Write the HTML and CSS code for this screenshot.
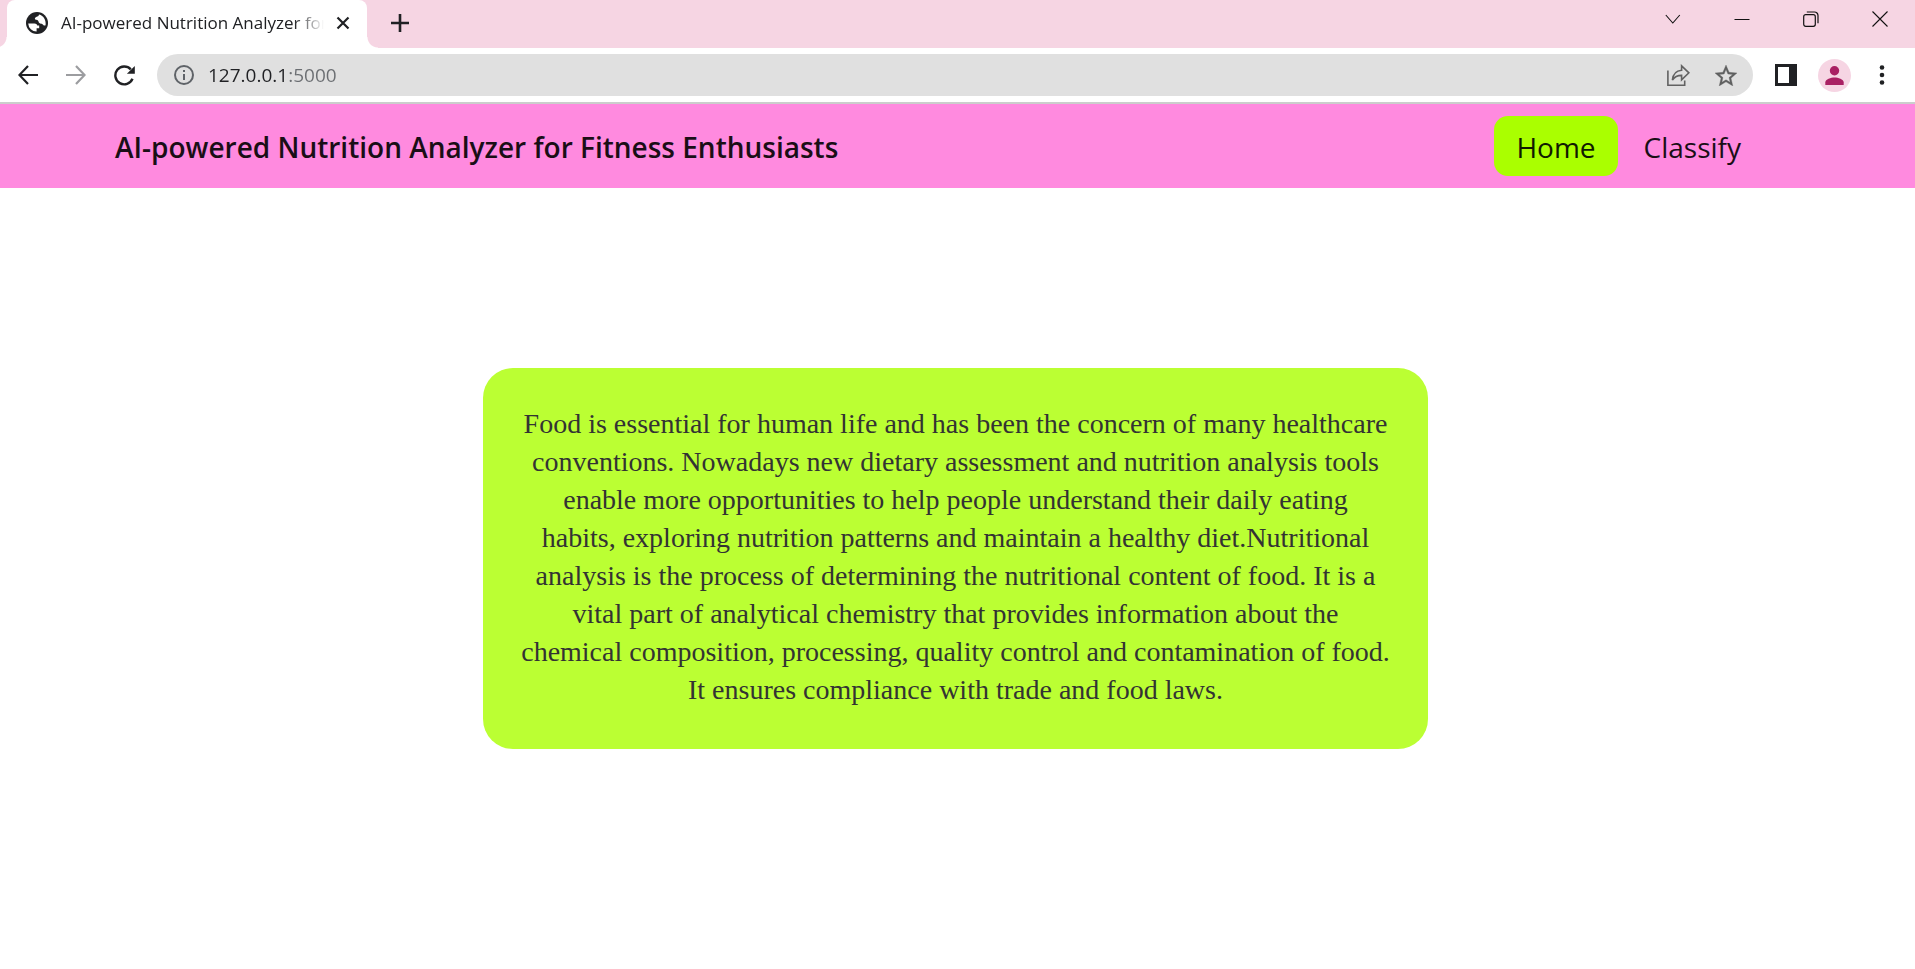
FILE: index.html
```html
<!DOCTYPE html>
<html lang="en">
<head>
<meta charset="utf-8">
<title>AI-powered Nutrition Analyzer for Fitness Enthusiasts</title>
<link rel="stylesheet" href="styles.css">
</head>
<body>
<div class="browser">
  <div class="tab-strip">
    <div class="tab">
      <svg class="favicon" viewBox="0 0 22 22" width="22" height="22" aria-hidden="true">
        <circle cx="11" cy="11" r="11" fill="#202124"/>
        <path d="M2.2 11.400h6.200c2 0 2.800 1 2.800 2.200h2v2.600h-2.600v3.400A8.700 8.700 0 0 1 2.200 11.400z" fill="#fff"/>
        <path d="M13 2.500c-.1 1.700-1.400 1.900-2.800 2.400-1.800.6-1.800 2.600 0 2.900 1.800.3 2.100.8 2.300 1.800.3 1.300 1.200 2.100 2.600 2.100 1.200 0 1.600.6 2.200 1.300.6.6 1.400.6 2.300.3.700-5.100-1.900-9.600-6.600-10.800z" fill="#fff"/>
      </svg>
      <span class="tab-title">AI-powered Nutrition Analyzer for Fitness Enthusiasts</span>
      <button class="tab-close" type="button" aria-label="Close tab">
        <svg viewBox="0 0 14 14" width="14" height="14"><path d="M1.500 1.500l11 11M12.500 1.500l-11 11" stroke="#202124" stroke-width="2.200" fill="none"/></svg>
      </button>
    </div>
    <button class="new-tab" type="button" aria-label="New tab">
      <svg viewBox="0 0 18 18" width="18" height="18"><path d="M9 0v18M0 9h18" stroke="#202124" stroke-width="2.600" fill="none"/></svg>
    </button>
    <div class="window-controls">
      <button type="button" aria-label="Search tabs"><svg viewBox="0 0 16 16" width="16" height="16"><path d="M.8 4l7 8 7-8" stroke="#111" stroke-width="1.100" fill="none"/></svg></button>
      <button type="button" aria-label="Minimize"><svg viewBox="0 0 16 16" width="16" height="16"><path d="M.5 8.500h15" stroke="#111" fill="none"/></svg></button>
      <button type="button" aria-label="Restore"><svg viewBox="0 0 16 16" width="16" height="16"><g fill="none" stroke="#111" stroke-width="1.200"><rect x=".7" y="3.700" width="11.600" height="11.600" rx="2"/><path d="M3.800 1h7.700a3.500 3.500 0 0 1 3.500 3.500v7.700"/></g></svg></button>
      <button type="button" aria-label="Close"><svg viewBox="0 0 16 16" width="16" height="16"><path d="M.5.5l15 15M15.500.5l-15 15" stroke="#111" stroke-width="1.100" fill="none"/></svg></button>
    </div>
  </div>
  <div class="toolbar">
    <button class="tool" type="button" aria-label="Back"><svg viewBox="0 0 20 20" width="20" height="20"><path d="M20 10H1.800M10 .9L1.400 10l8.600 9.100" stroke="#202124" stroke-width="2.200" fill="none"/></svg></button>
    <button class="tool" type="button" aria-label="Forward"><svg viewBox="0 0 20 20" width="20" height="20"><path d="M0 10h18.200M10 .9l8.600 9.100-8.600 9.100" stroke="#9c9da0" stroke-width="2.200" fill="none"/></svg></button>
    <button class="tool" type="button" aria-label="Reload"><svg viewBox="0 0 21 21" width="21" height="21"><path d="M18.500 13.800A8.900 8.900 0 1 1 16.800 4.400" stroke="#202124" stroke-width="2.400" fill="none"/><path d="M20.800.9v7.900h-7.900z" fill="#202124"/></svg></button>
    <div class="address-bar">
      <button class="site-info" type="button" aria-label="Site information"><svg viewBox="0 0 20 20" width="20" height="20"><circle cx="10" cy="10" r="9" fill="none" stroke="#5f6368" stroke-width="2"/><path d="M9 9h2v6H9zM9 5h2v2H9z" fill="#5f6368"/></svg></button>
      <input class="url" type="text" aria-label="Address" value="127.0.0.1:5000">
      <button class="tool" type="button" aria-label="Share"><svg viewBox="0 0 23 23" width="23" height="23"><g fill="none" stroke="#626262" stroke-width="1.600"><path d="M.9 6.600v14.600h16.800v-4.600"/><path d="M14.600 1.800v4.400C9.300 6.600 6 10 5.400 16c2-3 5-4.600 9.200-4.600v4.400l7.300-7z"/></g></svg></button>
      <button class="tool" type="button" aria-label="Bookmark"><svg viewBox="2 2 20 19" width="22" height="21"><path d="M22 9.240l-7.190-.62L12 2 9.190 8.630 2 9.240l5.460 4.730L5.820 21 12 17.270 18.180 21l-1.630-7.030L22 9.240zM12 15.400l-3.760 2.270 1-4.280-3.320-2.880 4.380-.38L12 6.100l1.710 4.040 4.380.38-3.320 2.880 1 4.280L12 15.400z" fill="#5f6060" stroke="#5f6060" stroke-width=".3"/></svg></button>
    </div>
    <button class="tool" type="button" aria-label="Side panel"><svg viewBox="0 0 22 22" width="22" height="22"><path d="M0 0h22v22H0zM3 3v16h11V3z" fill="#202124" fill-rule="evenodd"/></svg></button>
    <button class="tool" type="button" aria-label="Profile"><svg viewBox="0 0 33 33" width="33" height="33"><circle cx="16.500" cy="16.500" r="16.500" fill="#f6d5e3"/><circle cx="16.500" cy="11.700" r="4.700" fill="#a92063"/><path d="M7.300 26v-2.600c0-3.300 5.700-5 9.200-5s9.200 1.700 9.200 5V26z" fill="#a92063"/></svg></button>
    <button class="tool" type="button" aria-label="Menu"><svg viewBox="0 0 6 20" width="6" height="20"><g fill="#202124"><circle cx="3" cy="2.500" r="2.300"/><circle cx="3" cy="10" r="2.300"/><circle cx="3" cy="17.500" r="2.300"/></g></svg></button>
  </div>
</div>
<header class="navbar">
  <h1 class="brand">AI-powered Nutrition Analyzer for Fitness Enthusiasts</h1>
  <nav class="nav-links">
    <a class="nav-link active" href="#home">Home</a>
    <a class="nav-link" href="#classify">Classify</a>
  </nav>
</header>
<main class="content">
  <p class="intro">
    Food is essential for human life and has been the concern of many healthcare<br>
    conventions. Nowadays new dietary assessment and nutrition analysis tools<br>
    enable more opportunities to help people understand their daily eating<br>
    habits, exploring nutrition patterns and maintain a healthy diet.Nutritional<br>
    analysis is the process of determining the nutritional content of food. It is a<br>
    vital part of analytical chemistry that provides information about the<br>
    chemical composition, processing, quality control and contamination of food.<br>
    It ensures compliance with trade and food laws.
  </p>
</main>
</body>
</html>
```
FILE: styles.css
```css
* {
  box-sizing: border-box;
}

body {
  margin: 0;
  background: #fff;
  font-family: "Open Sans", "Noto Sans", sans-serif;
}

button {
  display: flex;
  align-items: center;
  justify-content: center;
  padding: 0;
  border: 0;
  background: none;
}

svg {
  display: block;
  flex: none;
}

.browser {
  border-bottom: 2px solid #cccdcd;
}

.tab-strip {
  display: flex;
  height: 48px;
  padding: 0 1px 0 7px;
  background: #f6d5e3;
}

.tab {
  position: relative;
  display: flex;
  align-items: center;
  width: 360px;
  padding: 0 17px 3px 19px;
  border-radius: 8px 8px 0 0;
  background: #fff;
}

.tab::before,
.tab::after {
  content: "";
  position: absolute;
  bottom: 0;
  width: 11px;
  height: 11px;
}

.tab::before {
  right: 100%;
  background: radial-gradient(circle at 0 0, #f6d5e3 10px, #fff 11px);
}

.tab::after {
  left: 100%;
  background: radial-gradient(circle at 100% 0, #f6d5e3 10px, #fff 11px);
}

.tab-title {
  flex: 1;
  min-width: 0;
  margin: 0 12px 0 13px;
  overflow: hidden;
  color: #202124;
  font-size: 17px;
  line-height: 24px;
  white-space: nowrap;
  -webkit-mask-image: linear-gradient(to left, transparent, #000 30px);
  mask-image: linear-gradient(to left, transparent, #000 30px);
}

.new-tab {
  width: 66px;
  height: 45px;
}

.window-controls {
  display: flex;
  margin-left: auto;
}

.window-controls button {
  width: 69px;
  height: 37px;
}

.toolbar {
  display: flex;
  align-items: center;
  height: 54px;
  padding: 0 9px 0 4px;
}

.tool {
  width: 48px;
  height: 42px;
}

.address-bar {
  display: flex;
  flex: 1;
  align-items: center;
  height: 42px;
  margin: 0 9px;
  padding: 0 3px;
  border-radius: 21px;
  background: #e0e0e0;
}

.site-info {
  width: 48px;
  height: 42px;
}

.url {
  flex: 1;
  min-width: 0;
  padding: 0;
  border: 0;
  outline: 0;
  background: linear-gradient(to right, #202124 80px, #6b6e72 80px) text;
  color: transparent;
  font: 19px/28px "Open Sans", "Noto Sans", sans-serif;
}

.navbar {
  display: flex;
  align-items: center;
  justify-content: space-between;
  padding: 12px 152px 12px 115px;
  background: #ff8adf;
}

.brand,
.nav-link {
  padding-top: 2px;
  color: #1a0e16;
  font-size: 28px;
  line-height: 58px;
}

.brand {
  margin: 0;
  font-weight: 600;
}

.nav-links {
  display: flex;
  gap: 4px;
}

.nav-link {
  padding-right: 22px;
  padding-left: 22px;
  border-radius: 14px;
  text-decoration: none;
}

.nav-link.active {
  background: #aaff00;
  color: #111a00;
}

.content {
  display: flex;
  justify-content: center;
  padding: 180px 28px 180px 24px;
}

.intro {
  width: 100%;
  max-width: 945px;
  margin: 0;
  padding: 37px 32px 40px;
  border-radius: 30px;
  background: #bbff33;
  color: #333;
  font-family: "Liberation Serif", serif;
  font-size: 28px;
  line-height: 38px;
  text-align: center;
}
```
